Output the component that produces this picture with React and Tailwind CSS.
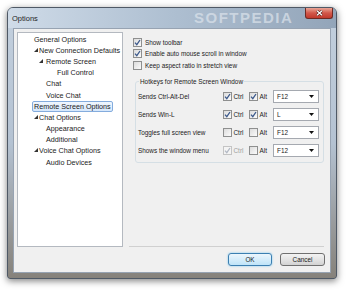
import React from "react";

const tree = [
  { label: "General Options", pad: "pl-[16px]" },
  { label: "New Connection Defaults", pad: "pl-[16px]", arrow: "w-[5px]" },
  { label: "Remote Screen", pad: "pl-[21px]", arrow: "w-[7px]" },
  { label: "Full Control", pad: "pl-[39px]" },
  { label: "Chat", pad: "pl-[28px]" },
  { label: "Voice Chat", pad: "pl-[28px]" },
  { label: "Remote Screen Options", pad: "pl-[16px]", selected: true },
  { label: "Chat Options", pad: "pl-[16px]", arrow: "w-[5px]" },
  { label: "Appearance", pad: "pl-[28px]" },
  { label: "Additional", pad: "pl-[28px]" },
  { label: "Voice Chat Options", pad: "pl-[16px]", arrow: "w-[5px]" },
  { label: "Audio Devices", pad: "pl-[28px]" },
];

const hotkeys = [
  { label: "Sends Ctrl-Alt-Del", ctrl: true, alt: true, key: "F12" },
  { label: "Sends Win-L", ctrl: true, alt: true, key: "L" },
  { label: "Toggles full screen view", ctrl: false, alt: false, key: "F12" },
  { label: "Shows the window menu", ctrl: true, alt: false, key: "F12", ctrlDisabled: true },
];

function Check({ checked, disabled }) {
  return (
    <span
      className={`flex h-[9px] w-[9px] shrink-0 items-center justify-center border ${
        disabled ? "border-[#c4c4c4] bg-[#f4f4f4]" : "border-[#8e8f8f] bg-gradient-to-br from-[#dcdcdc] to-[#fbfbfb]"
      }`}
    >
      {checked && (
        <svg width="7" height="7" viewBox="0 0 7 7">
          <path
            d="M1 3.6 L2.8 5.6 L6 1"
            fill="none"
            stroke={disabled ? "#b3b9c4" : "#3d5a8c"}
            strokeWidth="1.3"
          />
        </svg>
      )}
    </span>
  );
}

function Arrow() {
  return (
    <svg width="4" height="4" viewBox="0 0 4 4" className="mb-[1px]">
      <polygon points="4,0 4,4 0,4" fill="#333" />
    </svg>
  );
}

function Dropdown({ value }) {
  return (
    <div className="flex h-[13px] w-[46px] items-center justify-between border border-[#a5a9b0] bg-white pl-[3px] pr-[4px]">
      <span>{value}</span>
      <svg width="5" height="3" viewBox="0 0 5 3">
        <polygon points="0,0 5,0 2.5,3" fill="#111" />
      </svg>
    </div>
  );
}

export default function App() {
  return (
    <div
      className="h-[291px] w-[350px] overflow-hidden bg-white pl-[7px] pt-[7px] text-[7.2px] leading-[9px] text-[#1b1b1b]"
      style={{ fontFamily: '"Liberation Sans", Arial, sans-serif' }}
    >
      {/* window frame */}
      <div className="flex h-[272px] w-[330px] flex-col rounded-t-[6px] rounded-b-[3px] border border-[#4f5966] bg-gradient-to-b from-[#c3d0de] via-[#b4c2d2] to-[#86827b] px-[5px] pb-[5px] shadow-[0_2px_7px_rgba(0,0,0,0.5)]">
        {/* title bar */}
        <div className="relative -mx-[5px] flex h-[20px] items-center rounded-t-[5px] bg-gradient-to-r from-[#cfdbe8] via-[#aebfd1] to-[#93a5b9] pl-[4px]">
          <span className="text-[7.5px] text-[#1e1e1e]">Options</span>
          <span className="absolute left-[186px] top-[2px] text-[15px] font-bold leading-[16px] tracking-[1.5px] text-[#dde4ec]/70">
            SOFTPEDIA
          </span>
          <div className="absolute right-[3px] top-0 flex h-[11px] w-[28px] items-center justify-center rounded-b-[3px] border border-t-0 border-[#6d2a24] bg-gradient-to-b from-[#e8a597] via-[#d2574a] to-[#c1392c]">
            <svg width="7" height="6" viewBox="0 0 7 6">
              <path d="M1 0.8 L6 5.2 M6 0.8 L1 5.2" stroke="#4a1a16" strokeWidth="2.4" />
              <path d="M1 0.8 L6 5.2 M6 0.8 L1 5.2" stroke="#fff" strokeWidth="1.3" />
            </svg>
          </div>
        </div>

        {/* client area */}
        <div className="flex h-[245px] border border-[#97a3b2] bg-[#f0f0f0]">
          {/* tree */}
          <div className="ml-[3px] mt-[3px] h-[215px] w-[106px] border border-[#b4b9c0] bg-white pt-[0.5px]">
            {tree.map((item) => (
              <div key={item.label} className={`flex h-[11.2px] items-center ${item.pad}`}>
                {item.arrow && (
                  <span className={`flex ${item.arrow} items-center`}>
                    <Arrow />
                  </span>
                )}
                {item.selected ? (
                  <span className="-ml-[2px] rounded-[2px] border border-[#84acdd] bg-gradient-to-b from-[#f1f7fe] to-[#d5e7fb] px-[1px] leading-[9px]">
                    {item.label}
                  </span>
                ) : (
                  <span>{item.label}</span>
                )}
              </div>
            ))}
          </div>

          {/* right pane */}
          <div className="ml-[6px] flex w-[195px] flex-col pt-[8px] text-[6.4px]">
            <div className="flex flex-col pl-[4px]">
              <label className="flex h-[11.3px] items-center gap-[3px]">
                <Check checked />
                <span>Show toolbar</span>
              </label>
              <label className="flex h-[11.3px] items-center gap-[3px]">
                <Check checked />
                <span>Enable auto mouse scroll in window</span>
              </label>
              <label className="flex h-[11.3px] items-center gap-[3px]">
                <Check />
                <span>Keep aspect ratio in stretch view</span>
              </label>
            </div>

            <fieldset className="ml-[6px] mt-[6.5px] rounded-[3px] border border-[#d5dfe5] pb-[3px] pt-[1px]">
              <legend className="ml-[3px] px-[1px]">Hotkeys for Remote Screen Window</legend>
              {hotkeys.map((row) => (
                <div key={row.label} className="flex h-[18px] items-center pl-[2px]">
                  <span className="w-[85px]">{row.label}</span>
                  <span className="flex w-[26px] items-center gap-[1.5px]">
                    <Check checked={row.ctrl} disabled={row.ctrlDisabled} />
                    <span className={row.ctrlDisabled ? "text-[#a0a0a0]" : ""}>Ctrl</span>
                  </span>
                  <span className="flex w-[24px] items-center gap-[1.5px]">
                    <Check checked={row.alt} />
                    <span>Alt</span>
                  </span>
                  <Dropdown value={row.key} />
                </div>
              ))}
            </fieldset>

            <div className="flex-1" />

            <div className="border-t border-[#d0d0d0]" />
            <div className="mb-[6px] mt-[6px] flex justify-end gap-[8px]">
              <button className="flex h-[13px] w-[44px] items-center justify-center rounded-[3px] border border-[#3c7fb1] bg-gradient-to-b from-[#ecf6fd] to-[#bfe4f8] shadow-[0_0_2px_#6cc3f0]">
                OK
              </button>
              <button className="-mr-[1px] flex h-[13px] w-[45px] items-center justify-center rounded-[3px] border border-[#707070] bg-gradient-to-b from-[#f3f3f3] via-[#e4e4e4] to-[#d2d2d2]">
                Cancel
              </button>
            </div>
          </div>
        </div>
      </div>
    </div>
  );
}
